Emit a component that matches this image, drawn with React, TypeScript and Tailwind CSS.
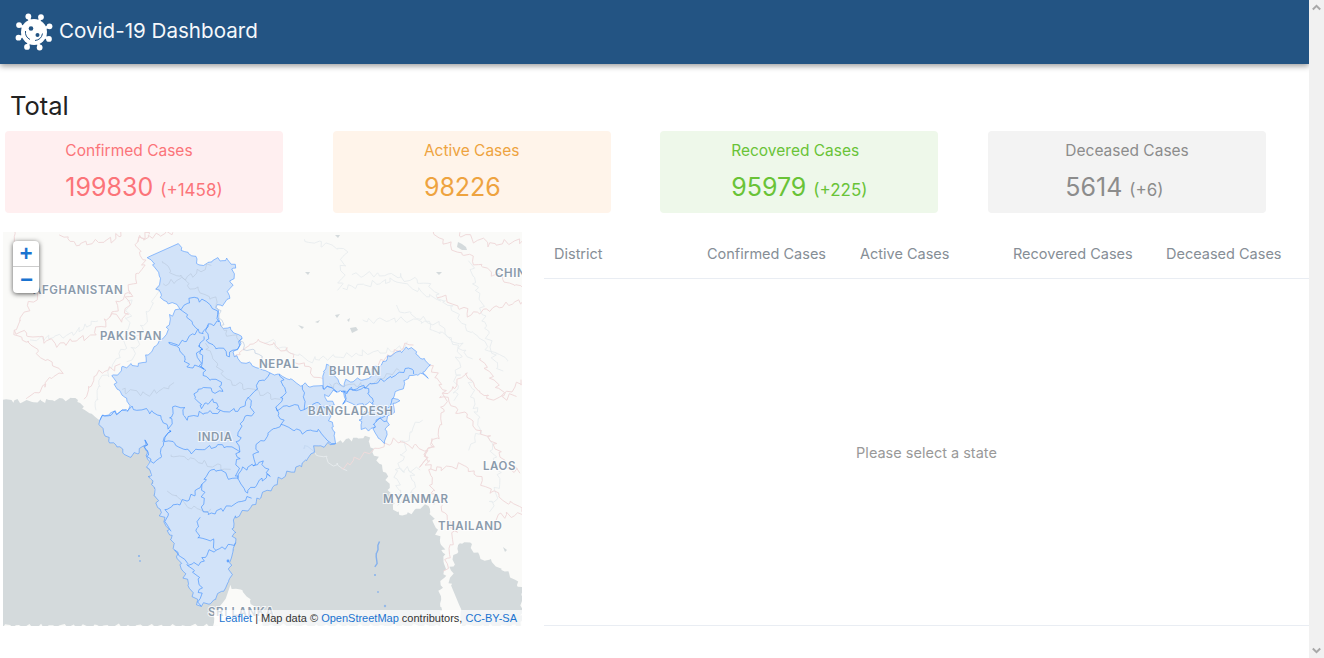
const cards = [
  { title: 'Confirmed Cases', value: '199830', delta: '(+1458)', box: 'bg-[#ffeff0] text-[#fb7479]' },
  { title: 'Active Cases', value: '98226', delta: '', box: 'bg-[#fff4ea] text-[#eea33f]' },
  { title: 'Recovered Cases', value: '95979', delta: '(+225)', box: 'bg-[#eef8ea] text-[#69c337]' },
  { title: 'Deceased Cases', value: '5614', delta: '(+6)', box: 'bg-[#f3f3f3] text-[#8c8c8c]' },
]

const columns = ['District', 'Confirmed Cases', 'Active Cases', 'Recovered Cases', 'Deceased Cases']

// bends a straight outline a little so it reads as a map border.
// the offset only depends on position, so shared edges stay shared
function rough(points: string, amp = 1.6) {
  const pts = points.split(' ').map(p => p.split(',').map(Number))
  const out: string[] = []
  const push = (x: number, y: number) => {
    const dx = Math.sin(y * 0.61 + x * 0.23) + 0.6 * Math.sin(y * 1.37 - x * 0.71)
    const dy = Math.sin(x * 0.57 - y * 0.31) + 0.6 * Math.sin(x * 1.29 + y * 0.83)
    out.push(`${(x + dx * amp).toFixed(1)},${(y + dy * amp).toFixed(1)}`)
  }
  pts.forEach((p, i) => {
    const next = pts[i + 1]
    if (!next) return push(p[0], p[1])
    const steps = Math.max(1, Math.round(Math.hypot(next[0] - p[0], next[1] - p[1]) / 3))
    for (let s = 0; s < steps; s++) {
      push(p[0] + ((next[0] - p[0]) * s) / steps, p[1] + ((next[1] - p[1]) * s) / steps)
    }
  })
  return out.join(' ')
}

// map drawing, all points in page pixels (viewBox starts at the map's corner)
const india =
  '178,243 187,253 203,265 213,260 227,260 235,263 232,280 227,303 217,307 220,323 243,337 233,357 270,373 280,375 303,385 323,387 335,390 323,397 333,400 328,410 334,430 335,443 315,447 310,458 283,477 260,498 243,513 233,520 235,543 230,563 230,580 222,593 210,603 200,605 190,587 175,552 170,533 157,503 150,473 148,463 145,440 140,452 128,457 107,437 98,418 110,413 128,410 128,403 117,388 113,377 123,366 140,365 157,343 165,337 170,317 182,308 163,300 158,287 160,277 148,257'
const northEast =
  '323,377 325,367 332,366 335,378 343,388 345,382 370,378 375,368 392,355 413,347 420,358 430,363 423,372 427,377 415,373 407,380 393,397 398,400 388,420 385,442 378,440 373,428 362,430 360,420 368,412 374,403 360,405 345,403 343,392 335,390 323,387'

const stateLines = [
  '182,308 190,298 207,302 217,310 218,322 207,325 203,335 197,330 182,308',
  '168,342 177,345 188,340 195,333 197,330',
  '168,342 182,350 188,367 203,367 198,357 203,337',
  '207,327 208,343 230,355 243,337',
  '200,343 202,360 205,377 220,382 222,393 203,387 193,393 203,407 213,400 220,412 203,413 185,418 183,407 173,407 170,427 153,412 130,408 98,418',
  '220,412 238,410 250,398 262,380 270,373',
  '165,440 190,452 220,445 238,450 237,480 248,492',
  '145,440 150,463 160,458 163,443 170,430 165,440',
  '167,508 182,502 193,495 203,485 208,472 213,468 235,480',
  '203,485 203,510 210,515 233,505 250,497',
  '167,508 167,527 172,530',
  '199,517 197,530 198,538 213,540 215,550 235,543',
  '215,550 205,553 204,562 190,565 175,552',
  '190,565 200,580 200,605',
  '248,492 260,480 270,475 262,462 253,465 258,445 270,432 283,425 300,432 318,430 325,440 335,443',
  '238,450 240,425 252,412 250,398',
  '283,425 276,410 290,405 305,410 320,402 328,410',
  '280,375 285,392 276,410',
  '305,410 303,385',
  '253,465 240,470 237,480',
  '343,392 367,386 390,378 413,367 413,373',
  '345,403 345,392 367,388 374,403',
  '393,397 385,412 374,425 373,428',
  '388,420 375,420',
]

const faintInside = [
  '170,455 195,460 230,470',
  '170,490 185,505 210,512',
  '215,300 225,330 270,365',
  '205,345 225,380 280,400',
  '330,385 370,385 400,370',
  '120,390 150,395 175,385',
  '160,262 190,285 215,300',
  '165,285 195,275 210,265',
]

const borders = [
  '14,232 18,260 40,292 14,330 30,345 60,372 27,400',
  '14,330 60,345 95,335 110,315 130,290 145,262 135,240 175,232',
  '62,232 75,245 110,240 122,232',
  '85,398 95,375 120,366',
  '135,240 150,232',
  '110,315 125,320 130,290',
  '233,357 260,340 285,350 320,378',
  '375,365 400,350 410,342',
  '430,363 445,395 440,430 422,465 435,440',
  '440,395 470,420 490,440 510,470 522,470',
  '340,470 372,450 395,440 425,450 430,470 435,505',
  '430,470 465,465 490,490 522,510',
  '445,570 455,530 440,505',
  '490,530 500,515 522,515',
  '430,232 475,262 522,290',
  '440,295 470,315 522,300',
  '480,360 505,395 522,380',
  '445,395 465,375 490,400 515,395',
  '455,232 490,245 522,240',
]

const rivers = [
  '355,275 395,275 430,285 470,330 490,350 510,360',
  '265,340 310,360 395,350 405,345',
  '360,320 420,320 460,345 455,400',
  '470,262 480,300 490,345 500,370',
  '130,300 125,345 115,365 100,380 95,410',
  '160,285 145,320 130,360',
  '400,470 405,440 420,420',
  '420,470 395,470 403,505',
  '30,340 70,335 100,320',
  '395,308 440,325 470,360',
  '345,288 395,280 440,300',
  '470,380 480,430 470,450',
  '300,445 345,470',
  '400,505 415,490 410,470',
  '490,440 500,480 490,510',
  '305,240 345,250 340,290',
]

const lakes = [
  '458,242 462,244 466,247 467,250 462,250 457,247',
  '350,328 356,327 358,330 352,333',
  '335,315 340,314 337,318',
  '298,325 304,327 302,329',
  '315,322 320,320 318,323',
  '436,272 442,272 439,275',
  '335,235 340,235 338,238',
  '305,272 310,272 308,275',
  '347,320 350,318 349,322',
  '503,547 507,550 505,552',
]

const labels = [
  { x: 33, y: 294, text: 'AFGHANISTAN' },
  { x: 100, y: 340, text: 'PAKISTAN' },
  { x: 259, y: 368, text: 'NEPAL' },
  { x: 329, y: 375, text: 'BHUTAN' },
  { x: 308, y: 415, text: 'BANGLADESH' },
  { x: 198, y: 441, text: 'INDIA' },
  { x: 483, y: 470, text: 'LAOS' },
  { x: 383, y: 503, text: 'MYANMAR' },
  { x: 438, y: 530, text: 'THAILAND' },
  { x: 495, y: 277, text: 'CHIN' },
  { x: 208, y: 616, text: 'SRI LANKA' },
]

function VirusIcon() {
  const spikes = [-110, -65, -20, 25, 70, 115, 160, 205]
  return (
    <svg width="40" height="40" viewBox="-20 -20 40 40" className="shrink-0">
      <circle r="13" fill="#fff" />
      {spikes.map(a => {
        const r = (a * Math.PI) / 180
        return (
          <g key={a}>
            <line x1={0} y1={0} x2={Math.cos(r) * 16} y2={Math.sin(r) * 16} stroke="#fff" strokeWidth="2.6" />
            <circle cx={Math.cos(r) * 16.5} cy={Math.sin(r) * 16.5} r="2.9" fill="#fff" />
          </g>
        )
      })}
      <circle cx="-3" cy="-3.5" r="2.3" fill="#235483" />
      <circle cx="3.5" cy="3" r="2" fill="#235483" />
      <path d="M8.5 1.5 A8.5 8.5 0 0 1 1 8.5" fill="none" stroke="#235483" strokeWidth="1" />
      <path d="M-8.5 -1 A8.5 8.5 0 0 0 -4 7.5" fill="none" stroke="#235483" strokeWidth="1" />
    </svg>
  )
}

function MapCanvas() {
  return (
    <svg viewBox="3 232 519 394" className="absolute inset-0 h-full w-full">
      <rect x="3" y="232" width="519" height="394" fill="#fafaf8" />
      <polygon
        fill="#d4dadc"
        points={rough('3,400 30,402 77,398 87,413 98,418 107,437 128,457 140,452 145,440 148,463 157,503 170,533 175,552 190,587 200,605 210,603 222,593 230,580 230,563 235,543 233,520 243,513 260,498 283,477 310,458 315,447 335,443 345,440 367,437 372,450 387,477 395,513 407,515 427,505 443,547 445,573 440,590 442,626 3,626')}
      />
      <polygon
        fill="#d4dadc"
        points={rough('450,587 452,565 460,543 470,543 473,553 493,563 510,575 522,587 522,626 462,626 460,607')}
      />
      <polygon fill="#fafaf8" points={rough('230,586 240,590 255,605 262,626 213,626 215,612 225,600')} />
      {lakes.map(p => (
        <polygon key={p} points={p} fill="#d4dadc" />
      ))}
      {rivers.map(p => (
        <polyline key={p} points={rough(p, 2.2)} fill="none" stroke="#e8ecee" strokeWidth="0.9" />
      ))}
      {borders.map(p => (
        <polyline key={p} points={rough(p, 2.2)} fill="none" stroke="#f0dadb" strokeWidth="1" />
      ))}
      <polygon points={rough(india)} fill="#3388ff" fillOpacity="0.2" stroke="#3388ff" strokeOpacity="0.5" strokeWidth="1" />
      <polygon points={rough(northEast)} fill="#3388ff" fillOpacity="0.2" stroke="#3388ff" strokeOpacity="0.5" strokeWidth="1" />
      {faintInside.map(p => (
        <polyline key={p} points={rough(p, 2)} fill="none" stroke="#bccbe0" strokeWidth="0.7" />
      ))}
      {stateLines.map(p => (
        <polyline key={p} points={rough(p)} fill="none" stroke="#3388ff" strokeOpacity="0.6" strokeWidth="1" />
      ))}
      <polyline points={rough('379,542 377,552 376,566', 1)} fill="none" stroke="#3388ff" strokeOpacity="0.5" strokeWidth="1.4" />
      <circle cx="228" cy="561" r="1.4" fill="#3388ff" fillOpacity="0.7" />
      <circle cx="139" cy="556" r="1" fill="#3388ff" fillOpacity="0.5" />
      <circle cx="140" cy="561" r="1" fill="#3388ff" fillOpacity="0.4" />
      <circle cx="375" cy="575" r="1" fill="#3388ff" fillOpacity="0.5" />
      <circle cx="378" cy="592" r="1" fill="#3388ff" fillOpacity="0.4" />
      <circle cx="385" cy="606" r="1.2" fill="#3388ff" fillOpacity="0.4" />
      {labels.map(l => (
        <text
          key={l.text}
          x={l.x}
          y={l.y}
          fill="#8a9aab"
          stroke="#ffffff"
          strokeOpacity="0.75"
          strokeWidth="2"
          paintOrder="stroke"
          fontSize="11.5"
          fontWeight="600"
          letterSpacing="0.6"
        >
          {l.text}
        </text>
      ))}
    </svg>
  )
}

function MapPanel() {
  return (
    <div className="relative ml-[3px] h-[394px] w-[519px] shrink-0 overflow-hidden">
      <MapCanvas />
      <div className="absolute left-[10px] top-[9px] w-[26px] rounded-[4px] bg-white shadow-[0_1px_5px_rgba(0,0,0,0.65)]">
        <div className="flex h-[26px] items-center justify-center border-b border-[#ccc] pt-[3px] font-['Liberation_Mono',monospace] text-[22px] font-bold text-[#1a73d0]">+</div>
        <div className="flex h-[26px] items-center justify-center pl-[1px] pt-[3px] font-['Liberation_Mono',monospace] text-[22px] font-bold text-[#1a73d0]">−</div>
      </div>
      <div className="absolute bottom-0 right-0 bg-white/70 px-[5px] font-['Liberation_Sans',sans-serif] text-[11px] leading-[16px] text-[#333]">
        <span className="text-[#1a73d0]">Leaflet</span> | Map data © <span className="text-[#1a73d0]">OpenStreetMap</span> contributors, <span className="text-[#1a73d0]">CC-BY-SA</span>
      </div>
    </div>
  )
}

function Scrollbar() {
  return (
    <div className="flex h-full w-[15px] shrink-0 flex-col items-center justify-between bg-[#f1f1f1] py-[4px]">
      <svg width="9" height="7" viewBox="0 0 9 7"><path d="M0.8 5.5 L4.5 1.8 L8.2 5.5" fill="none" stroke="#a8a8a8" strokeWidth="2" /></svg>
      <svg width="9" height="7" viewBox="0 0 9 7"><path d="M0.8 1.5 L4.5 5.2 L8.2 1.5" fill="none" stroke="#a8a8a8" strokeWidth="2" /></svg>
    </div>
  )
}

export default function App() {
  return (
    <div className="flex h-[658px] w-full overflow-hidden bg-white font-['Inter',sans-serif]">
      <div className="min-w-0 flex-1">
        {/* header */}
        <div className="flex h-[64px] items-center gap-[5px] bg-[#235483] pl-[14px] shadow-[0_2px_6px_rgba(0,0,0,0.4)]">
          <VirusIcon />
          <span className="mb-[2px] text-[20.6px] text-[#f5f8fb]">Covid-19 Dashboard</span>
        </div>

        <div className="pl-[10px] pt-[26px] text-[25.5px] leading-[32px] text-[#222]">Total</div>

        {/* totals */}
        <div className="mt-[9px] flex gap-[49.7px] pl-[5px]">
          {cards.map(c => (
            <div key={c.title} className={`flex h-[82px] w-[278px] justify-center rounded-[4px] pt-[10px] ${c.box}`}>
              <div className="w-fit">
                <div className="text-[15.5px] leading-[20px]">{c.title}</div>
                <div className="mt-[10px] flex items-baseline gap-[7px] whitespace-nowrap">
                  <span className="text-[25px] leading-[32px]">{c.value}</span>
                  {c.delta && <span className="text-[17px] leading-[24px]">{c.delta}</span>}
                </div>
              </div>
            </div>
          ))}
        </div>

        {/* map and district table */}
        <div className="mt-[19px] flex gap-[22px]">
          <MapPanel />
          <div className="flex h-[394px] min-w-0 flex-1 flex-col border-b border-[#e9edf3]">
            <div className="grid h-[47px] grid-cols-5 items-center border-b border-[#e9edf3] pb-[2px]">
              {columns.map(h => (
                <div key={h} className="whitespace-nowrap pl-[10px] text-[14.5px] text-[#868e96]">{h}</div>
              ))}
            </div>
            <div className="flex flex-1 items-center justify-center pt-[2px] text-[14.5px] text-[#999]">Please select a state</div>
          </div>
        </div>
      </div>
      <Scrollbar />
    </div>
  )
}
